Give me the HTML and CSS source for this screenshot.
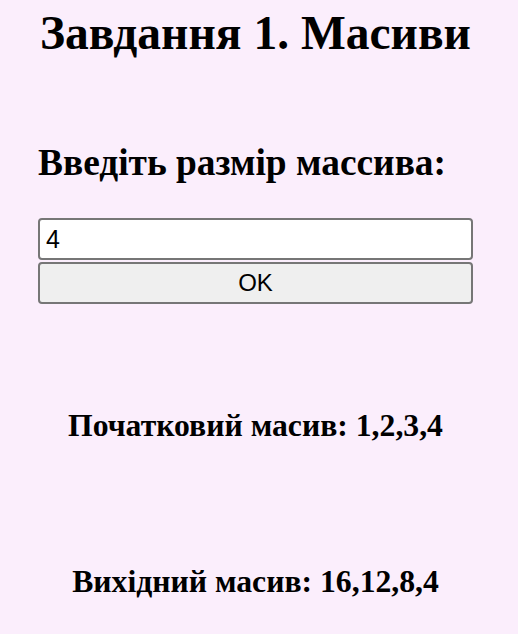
FILE: index.html
```html
<!DOCTYPE html>
<html lang="uk">
<head>
<meta charset="utf-8">
<title>Завдання 1. Масиви</title>
<link rel="stylesheet" href="styles.css">
</head>
<body>
<main class="page">
  <h1 class="title">Завдання 1. Масиви</h1>
  <h2 class="prompt">Введіть размір массива:</h2>
  <form class="form">
    <input class="field" type="text" value="4">
    <button class="btn" type="button">OK</button>
  </form>
  <p class="result result-first">Початковий масив: 1,2,3,4</p>
  <p class="result result-second">Вихідний масив: 16,12,8,4</p>
</main>
</body>
</html>
```
FILE: styles.css
```css
html, body {
  margin: 0;
  padding: 0;
  background: #fbeefc;
}
body {
  font-family: "Liberation Serif", "Times New Roman", serif;
  color: #000;
}
.page {
  width: 435px;
  margin-left: 38px;
  display: flex;
  flex-direction: column;
}
.title {
  margin: 6px 0 0;
  font-size: 47.5px;
  line-height: 55px;
  font-weight: bold;
  text-align: center;
  white-space: nowrap;
}
.prompt {
  margin: 81px 0 0;
  font-size: 37.4px;
  line-height: 41px;
  font-weight: bold;
  white-space: nowrap;
}
.form {
  margin: 35px 0 0;
  display: flex;
  flex-direction: column;
  gap: 2px;
}
.field {
  box-sizing: border-box;
  width: 100%;
  height: 42px;
  margin: 0;
  padding: 0 6px;
  border: 2px solid #767676;
  border-radius: 4px;
  background: #fff;
  font-family: "Liberation Sans", Arial, sans-serif;
  font-size: 25px;
  color: #000;
}
.btn {
  box-sizing: border-box;
  width: 100%;
  height: 42px;
  margin: 0;
  padding: 0;
  border: 2px solid #767676;
  border-radius: 4px;
  background: #efefef;
  font-family: "Liberation Sans", Arial, sans-serif;
  font-size: 24px;
  color: #000;
}
.result {
  margin: 0;
  font-size: 31.7px;
  line-height: 32px;
  font-weight: bold;
  text-align: center;
  white-space: nowrap;
}
.result-first {
  margin-top: 106px;
}
.result-second {
  margin-top: 124px;
}
```
